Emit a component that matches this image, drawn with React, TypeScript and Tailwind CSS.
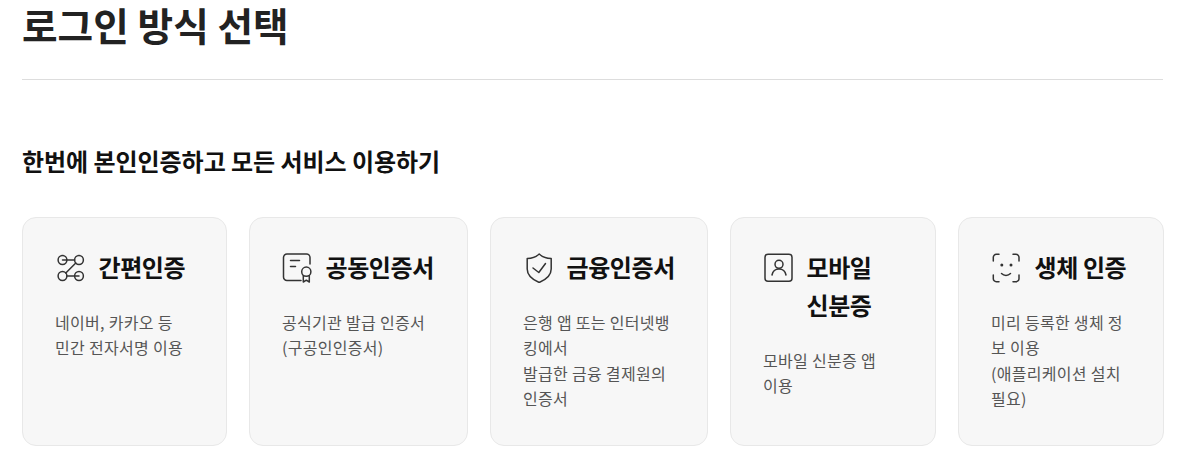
const font = { fontFamily: '"Noto Sans CJK KR", "Noto Sans", sans-serif' };

const cards = [
  {
    title: '간편인증',
    desc: ['네이버, 카카오 등', '민간 전자서명 이용'],
    icon: (
      <>
        <circle cx="7.5" cy="7" r="4.4" />
        <circle cx="24" cy="7" r="4.4" />
        <circle cx="7.5" cy="23" r="4.4" />
        <circle cx="24" cy="23" r="4.4" />
        <path d="M7.5 7H19.6M20.8 10L10.8 20M11.9 23H24" />
      </>
    ),
  },
  {
    title: '공동인증서',
    desc: ['공식기관 발급 인증서', '(구공인인증서)'],
    icon: (
      <>
        <path d="M19 27.500H5a3.500 3.500 0 0 1-3.500-3.500V4.500A3.500 3.500 0 0 1 5 1h19.500A3.500 3.500 0 0 1 28 4.500V11" />
        <path d="M8.500 7.500h9M8.500 13.500h5" />
        <circle cx="24.300" cy="18.700" r="4.600" />
        <path d="M21.300 22.500V29l3-1.800 3 1.800v-6.500" />
      </>
    ),
  },
  {
    title: '금융인증서',
    desc: ['은행 앱 또는 인터넷뱅킹에서', '발급한 금융 결제원의 인증서'],
    icon: (
      <>
        <path d="M16.200 1C13 4 8.500 5.500 4.200 5.500V16c0 6 5 10.500 12 13.500C23.200 26.500 28.200 22 28.200 16V5.500C23.900 5.500 19.400 4 16.200 1z" />
        <path d="M10 15l5.800 4.500L22.500 10.500" />
      </>
    ),
  },
  {
    title: (
      <>
        모바일
        <br />
        신분증
      </>
    ),
    desc: ['모바일 신분증 앱', '이용'],
    icon: (
      <>
        <rect x="2" y="1.300" width="27" height="27" rx="3" />
        <circle cx="16" cy="11.300" r="4" />
        <path d="M9 22c.8-4 3.500-6 7-6s6.200 2 7 6" />
      </>
    ),
  },
  {
    title: '생체 인증',
    desc: ['미리 등록한 생체 정보 이용', '(애플리케이션 설치 필요)'],
    icon: (
      <>
        <path d="M2.300 8V4.300a3 3 0 0 1 3-3H8M22 1.300h3a3 3 0 0 1 3 3V8M28 22v3.700a3 3 0 0 1-3 3h-3M8 28.700H5.300a3 3 0 0 1-3-3V22" />
        <path d="M10.500 20.500c2.500 2.500 6.500 2.500 9 0" />
        <circle cx="10.800" cy="12" r="1.500" fill="#333" stroke="none" />
        <circle cx="20" cy="12" r="1.500" fill="#333" stroke="none" />
      </>
    ),
  },
];

export default function App() {
  return (
    <div className="h-[467px] overflow-hidden bg-white pl-[22px] pr-[28px]" style={font}>
      <h1 className="mr-px h-[80px] border-b border-[#dddddd] text-[38.700px] leading-[49px] font-bold text-[#222222]">
        로그인 방식 선택
      </h1>
      <h2 className="mt-[63px] text-[24px] leading-[36px] font-bold tracking-[-0.05px] text-[#111111]">
        한번에 본인인증하고 모든 서비스 이용하기
      </h2>
      <div className="mt-[38px] grid grid-cols-[205px_219px_218px_206px_206px] gap-[22px]">
        {cards.map((card, i) => (
          <div
            key={i}
            className="h-[229px] rounded-[14px] border border-[#e8e8e8] bg-[#f7f7f7] pt-[31px] pr-[32px] pl-[32px]"
          >
            <div className="flex gap-[13.500px]">
              <svg
                className="mt-[4px] h-[30px] w-[30px] shrink-0"
                viewBox="0 0 30 30"
                fill="none"
                stroke="#333333"
                strokeWidth="1.500"
                strokeLinecap="round"
                strokeLinejoin="round"
              >
                {card.icon}
              </svg>
              <div className="-mt-px mb-px text-[24px] leading-[38px] font-bold tracking-[-0.4px] whitespace-nowrap text-[#111111]">
                {card.title}
              </div>
            </div>
            <div className="mt-[23px] text-[16px] leading-[25.400px] tracking-[0.3px] text-[#555555]">
              {card.desc.map((d, j) => (
                <p key={j}>{d}</p>
              ))}
            </div>
          </div>
        ))}
      </div>
    </div>
  );
}
